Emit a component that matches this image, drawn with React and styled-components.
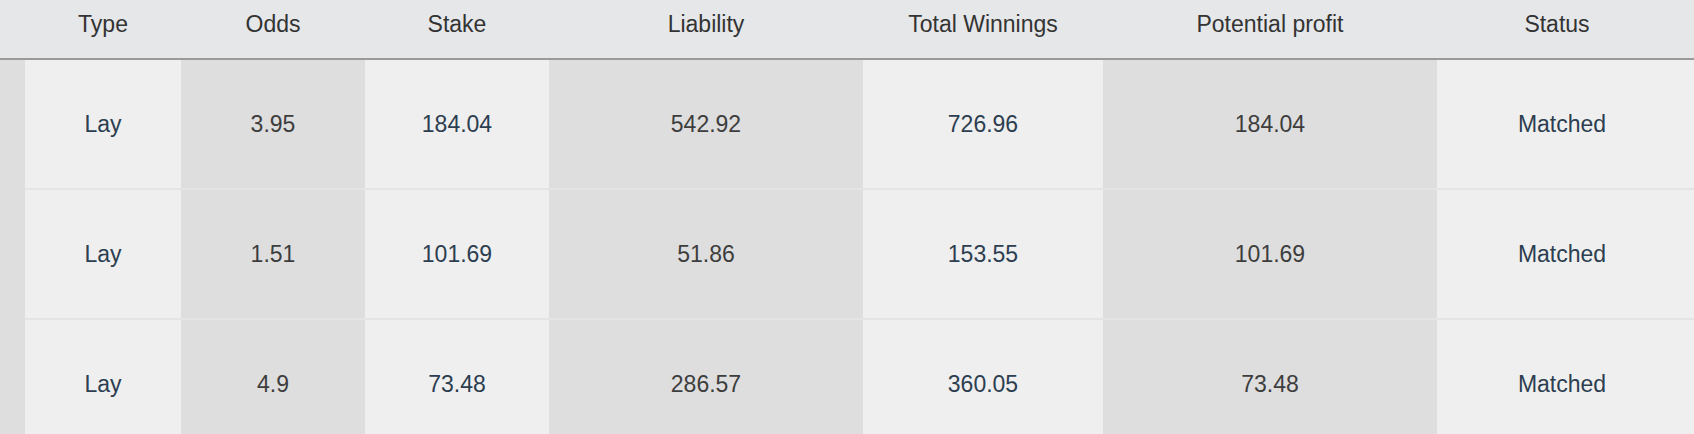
import React from "react";
import styled, { createGlobalStyle } from "styled-components";

const COLUMNS = "25px 156px 184px 184px 314px 240px 334px 1fr";

const columns = [
  { key: "type", label: "Type", dark: false },
  { key: "odds", label: "Odds", dark: true },
  { key: "stake", label: "Stake", dark: false },
  { key: "liability", label: "Liability", dark: true },
  { key: "total", label: "Total Winnings", dark: false },
  { key: "profit", label: "Potential profit", dark: true },
  { key: "status", label: "Status", dark: false },
];

const bets = [
  { type: "Lay", odds: "3.95", stake: "184.04", liability: "542.92", total: "726.96", profit: "184.04", status: "Matched" },
  { type: "Lay", odds: "1.51", stake: "101.69", liability: "51.86", total: "153.55", profit: "101.69", status: "Matched" },
  { type: "Lay", odds: "4.9", stake: "73.48", liability: "286.57", total: "360.05", profit: "73.48", status: "Matched" },
];

export default function App() {
  return (
    <>
      <GlobalStyle />
      <Table>
        <HeaderRow>
          <Gutter />
          {columns.map(col => (
            <HeaderCell key={col.key} $last={col.key === "status"}>
              {col.label}
            </HeaderCell>
          ))}
        </HeaderRow>
        {bets.map((bet, i) => (
          <Row key={i}>
            <StripCell />
            {columns.map(col => (
              <Cell key={col.key} $dark={col.dark} $last={col.key === "status"}>
                {bet[col.key]}
              </Cell>
            ))}
          </Row>
        ))}
      </Table>
    </>
  );
}

const GlobalStyle = createGlobalStyle`
  html, body {
    margin: 0;
    padding: 0;
    background: #efefef;
    overflow: hidden;
  }
  body {
    font-family: "Liberation Sans", Arial, sans-serif;
  }
`;

const Table = styled.div`
  width: 1694px;
  height: 434px;
  overflow: hidden;
  background: #efefef;
`;

const HeaderRow = styled.div`
  display: grid;
  grid-template-columns: ${COLUMNS};
  height: 58px;
  background: #e6e7e9;
  border-bottom: 2px solid #9a9a9a;
`;

const Gutter = styled.div``;

const HeaderCell = styled.div`
  padding-top: 10px;
  padding-right: ${props => (props.$last ? "17px" : "0")};
  text-align: center;
  font-size: 23px;
  line-height: 28px;
  color: #333;
`;

const Row = styled.div`
  display: grid;
  grid-template-columns: ${COLUMNS};
  height: 130px;
`;

const StripCell = styled.div`
  background: #dedede;
`;

const Cell = styled.div`
  display: flex;
  align-items: center;
  justify-content: center;
  padding-right: ${props => (props.$last ? "7px" : "0")};
  background: ${props => (props.$dark ? "#dedede" : "#efefef")};
  border-bottom: 2px solid #e4e4e4;
  font-size: 23px;
  color: ${props => (props.$dark ? "#3d3d3d" : "#2c3e50")};
`;
